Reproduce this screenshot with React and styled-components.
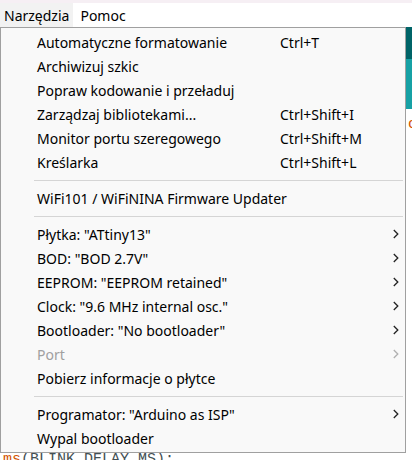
import styled, { createGlobalStyle } from 'styled-components';

const Global = createGlobalStyle`
    html, body{
        margin: 0;
        padding: 0;
        background: #ffffff;
        overflow: hidden;
    }
    *{
        box-sizing: border-box;
    }
`;

const Page = styled.div`
    position: relative;
    width: 412px;
    height: 460px;
    overflow: hidden;
    font-family: "Noto Sans", "Liberation Sans", sans-serif;
    font-size: 14px;
    color: #000;
`;

const TopStrip = styled.div`
    height: 3px;
    background: #f6eff4;
`;

const MenuBar = styled.div`
    display: flex;
    gap: 3px;
    height: 24px;
    background: #ffffff;
`;

const BarItem = styled.div`
    display: flex;
    align-items: center;
    padding: 0 4px;
    background: ${({ $open }) => $open ? '#f2f2f2' : 'transparent'};
`;

const Editor = styled.div`
    display: flex;
    flex-direction: column;
`;

const Toolbar = styled.div`
    height: 32px;
    background: #006468;
`;

const Tabs = styled.div`
    height: 50px;
    background: #17a1a5;
`;

const Code = styled.div`
    display: flex;
    flex-direction: column;
    padding: 5px 0 0 3px;
    font-family: "Liberation Mono", monospace;
    font-size: 15px;
    line-height: 22px;
    white-space: pre;
`;

const CodeLine = styled.div`
    height: 22px;
    margin-top: ${({ $gap }) => $gap || 0}px;
    color: ${({ $c }) => $c || '#434f54'};
`;

const Kw = styled.span`
    color: #d35400;
`;

const Dropdown = styled.div`
    position: absolute;
    left: 0;
    top: 27px;
    width: 406px;
    display: flex;
    flex-direction: column;
    padding: 2px 2px 2px 1px;
    background: #f9f9f9;
    border: 1px solid #a0a0a0;
`;

const Item = styled.div`
    display: flex;
    align-items: center;
    height: 24px;
    padding-left: 35px;
    color: ${({ $disabled }) => $disabled ? '#a0a0a0' : '#000'};
`;

const Label = styled.span`
    flex: 1;
`;

const Shortcut = styled.span`
    width: 123px;
`;

const Arrow = styled.svg`
    width: 6px;
    height: 10px;
    margin-right: 4px;
`;

const Separator = styled.div`
    height: 1px;
    margin: 6px 0 5px 32px;
    background: #d5d5d5;
`;

const Chevron = ({ disabled }) => (
    <Arrow viewBox='0 0 6 10'>
        <polyline points='0.8,1 4.8,5 0.8,9' fill='none'
            stroke={disabled ? '#b0b0b0' : '#222'} strokeWidth='1.3' />
    </Arrow>
);

const groups = [
    [
        { label: 'Automatyczne formatowanie', key: 'Ctrl+T' },
        { label: 'Archiwizuj szkic' },
        { label: 'Popraw kodowanie i przeładuj' },
        { label: 'Zarządzaj bibliotekami...', key: 'Ctrl+Shift+I' },
        { label: 'Monitor portu szeregowego', key: 'Ctrl+Shift+M' },
        { label: 'Kreślarka', key: 'Ctrl+Shift+L' },
    ],
    [
        { label: 'WiFi101 / WiFiNINA Firmware Updater' },
    ],
    [
        { label: 'Płytka: "ATtiny13"', sub: true },
        { label: 'BOD: "BOD 2.7V"', sub: true },
        { label: 'EEPROM: "EEPROM retained"', sub: true },
        { label: 'Clock: "9.6 MHz internal osc."', sub: true },
        { label: 'Bootloader: "No bootloader"', sub: true },
        { label: 'Port', sub: true, disabled: true },
        { label: 'Pobierz informacje o płytce' },
    ],
    [
        { label: 'Programator: "Arduino as ISP"', sub: true },
        { label: 'Wypal bootloader' },
    ],
];

// only the thin strip right of the dropdown shows these
const codeLines = [
    { t: '  }                                          c', c: '#d35400' },
    { t: '  pinMode(LED_PIN, OUTPUT);' },
    { t: '' }, { t: '' }, { t: '' }, { t: '' }, { t: '' }, { t: '' },
    { t: '  digitalWrite(LED_PIN, HIGH);                 E::', gap: 30 },
    { t: '  delay(BLINK_DELAY_MS);                       PC', c: '#d35400' },
    { t: '' }, { t: '' }, { t: '' },
];

export default function App(){
    return (
        <Page>
            <Global />
            <TopStrip />
            <MenuBar>
                <BarItem $open>Narzędzia</BarItem>
                <BarItem>Pomoc</BarItem>
            </MenuBar>
            <Editor>
                <Toolbar />
                <Tabs />
                <Code>
                    {codeLines.map((l, i) => (
                        <CodeLine key={i} $c={l.c} $gap={l.gap}>{l.t || ' '}</CodeLine>
                    ))}
                    <CodeLine $gap={19}><Kw>ms</Kw>(BLINK_DELAY_MS);</CodeLine>
                </Code>
            </Editor>
            <Dropdown>
                {groups.map((g, gi) => (
                    <div key={gi}>
                        {gi > 0 && <Separator />}
                        {g.map(it => (
                            <Item key={it.label} $disabled={it.disabled}>
                                <Label>{it.label}</Label>
                                {it.key && <Shortcut>{it.key}</Shortcut>}
                                {it.sub && <Chevron disabled={it.disabled} />}
                            </Item>
                        ))}
                    </div>
                ))}
            </Dropdown>
        </Page>
    );
}
